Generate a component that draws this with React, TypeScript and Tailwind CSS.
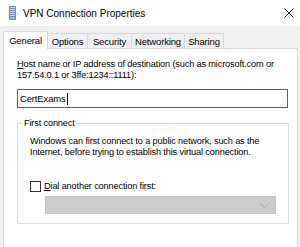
import React from 'react'

const tabs = [
  { label: 'Options', w: 'w-[40px]' },
  { label: 'Security', w: 'w-[44px]' },
  { label: 'Networking', w: 'w-[53px]' },
  { label: 'Sharing', w: 'w-[39px]' },
]

function VpnIcon() {
  return (
    <svg width="7" height="14" viewBox="0 0 7 14">
      <rect x="0" y="0" width="7" height="14" fill="#6f8fb5" />
      <rect x="1" y="1" width="5" height="1" fill="#c9d9ec" />
      <rect x="1" y="3" width="5" height="1" fill="#c9d9ec" />
      <rect x="1" y="5" width="5" height="1" fill="#c9d9ec" />
      <rect x="1" y="7" width="5" height="1" fill="#c9d9ec" />
      <rect x="1" y="9" width="5" height="1" fill="#c9d9ec" />
      <rect x="1" y="11" width="5" height="2" fill="#9fb6d3" />
    </svg>
  )
}

export default function App() {
  return (
    <div className="w-[300px] h-[247px] bg-[#f0f0f0] overflow-hidden flex flex-col text-[9.2px] tracking-[-0.15px] leading-[11px] text-black whitespace-nowrap font-['Liberation_Sans',sans-serif]">
      {/* Title bar */}
      <div className="h-[26px] bg-white flex items-center shrink-0">
        <div className="ml-[9px] mt-[-1px]">
          <VpnIcon />
        </div>
        <span className="ml-[7px] text-[10px] tracking-normal">VPN Connection Properties</span>
        <svg className="ml-auto mr-[6px]" width="10" height="10" viewBox="0 0 10 10">
          <path d="M0.5 0.5 L9.5 9.5 M9.5 0.5 L0.5 9.5" stroke="#222" strokeWidth="1" />
        </svg>
      </div>

      {/* Tabs */}
      <div className="flex items-end pl-[3px] mt-[5px] relative z-10">
        <div className="w-[45px] h-[18px] bg-white border border-b-0 border-[#d9d9d9] flex items-center justify-center text-[9.5px] mb-[-1px]">
          General
        </div>
        {tabs.map((t) => (
          <div
            key={t.label}
            className={`${t.w} h-[15px] border-t border-r border-[#d9d9d9] flex items-center justify-center text-[9.5px]`}
          >
            {t.label}
          </div>
        ))}
      </div>

      {/* Panel */}
      <div className="flex-1 ml-[3px] mr-[2px] bg-white border border-b-0 border-[#d9d9d9] pl-[13px] pt-[10px]">
        <div>
          <span className="underline">H</span>ost name or IP address of destination (such as microsoft.com or
          <br />
          157.54.0.1 or 3ffe:1234::1111):
        </div>
        <div className="mt-[8px] w-[271px] h-[19px] border border-[#0078d7] flex items-center pl-[2px] text-[9.5px]">
          CertExams
          <span className="w-px h-[12px] bg-black ml-px" />
        </div>

        {/* First connect group */}
        <div className="relative mt-[15px] w-[272px] h-[101px] border border-[#dcdcdc] pl-[12px] pt-[12px]">
          <span className="absolute left-[5px] top-[-6px] bg-white px-px">First connect</span>
          <div>
            Windows can first connect to a public network, such as the
            <br />
            Internet, before trying to establish this virtual connection.
          </div>
          <div className="flex items-center mt-[23px]">
            <div className="w-[11px] h-[11px] border border-[#333] bg-white" />
            <span className="ml-[3px]">
              <span className="underline">D</span>ial another connection first:
            </span>
          </div>
          <div className="mt-[4px] ml-[15px] w-[231px] h-[18px] bg-[#cccccc] border border-[#c4c4c4] flex items-center justify-end pr-[6px]">
            <svg width="9" height="5" viewBox="0 0 9 5">
              <path d="M0.5 0.5 L4.5 4.5 L8.5 0.5" fill="none" stroke="#a8a8a8" strokeWidth="1" />
            </svg>
          </div>
        </div>
      </div>
    </div>
  )
}
